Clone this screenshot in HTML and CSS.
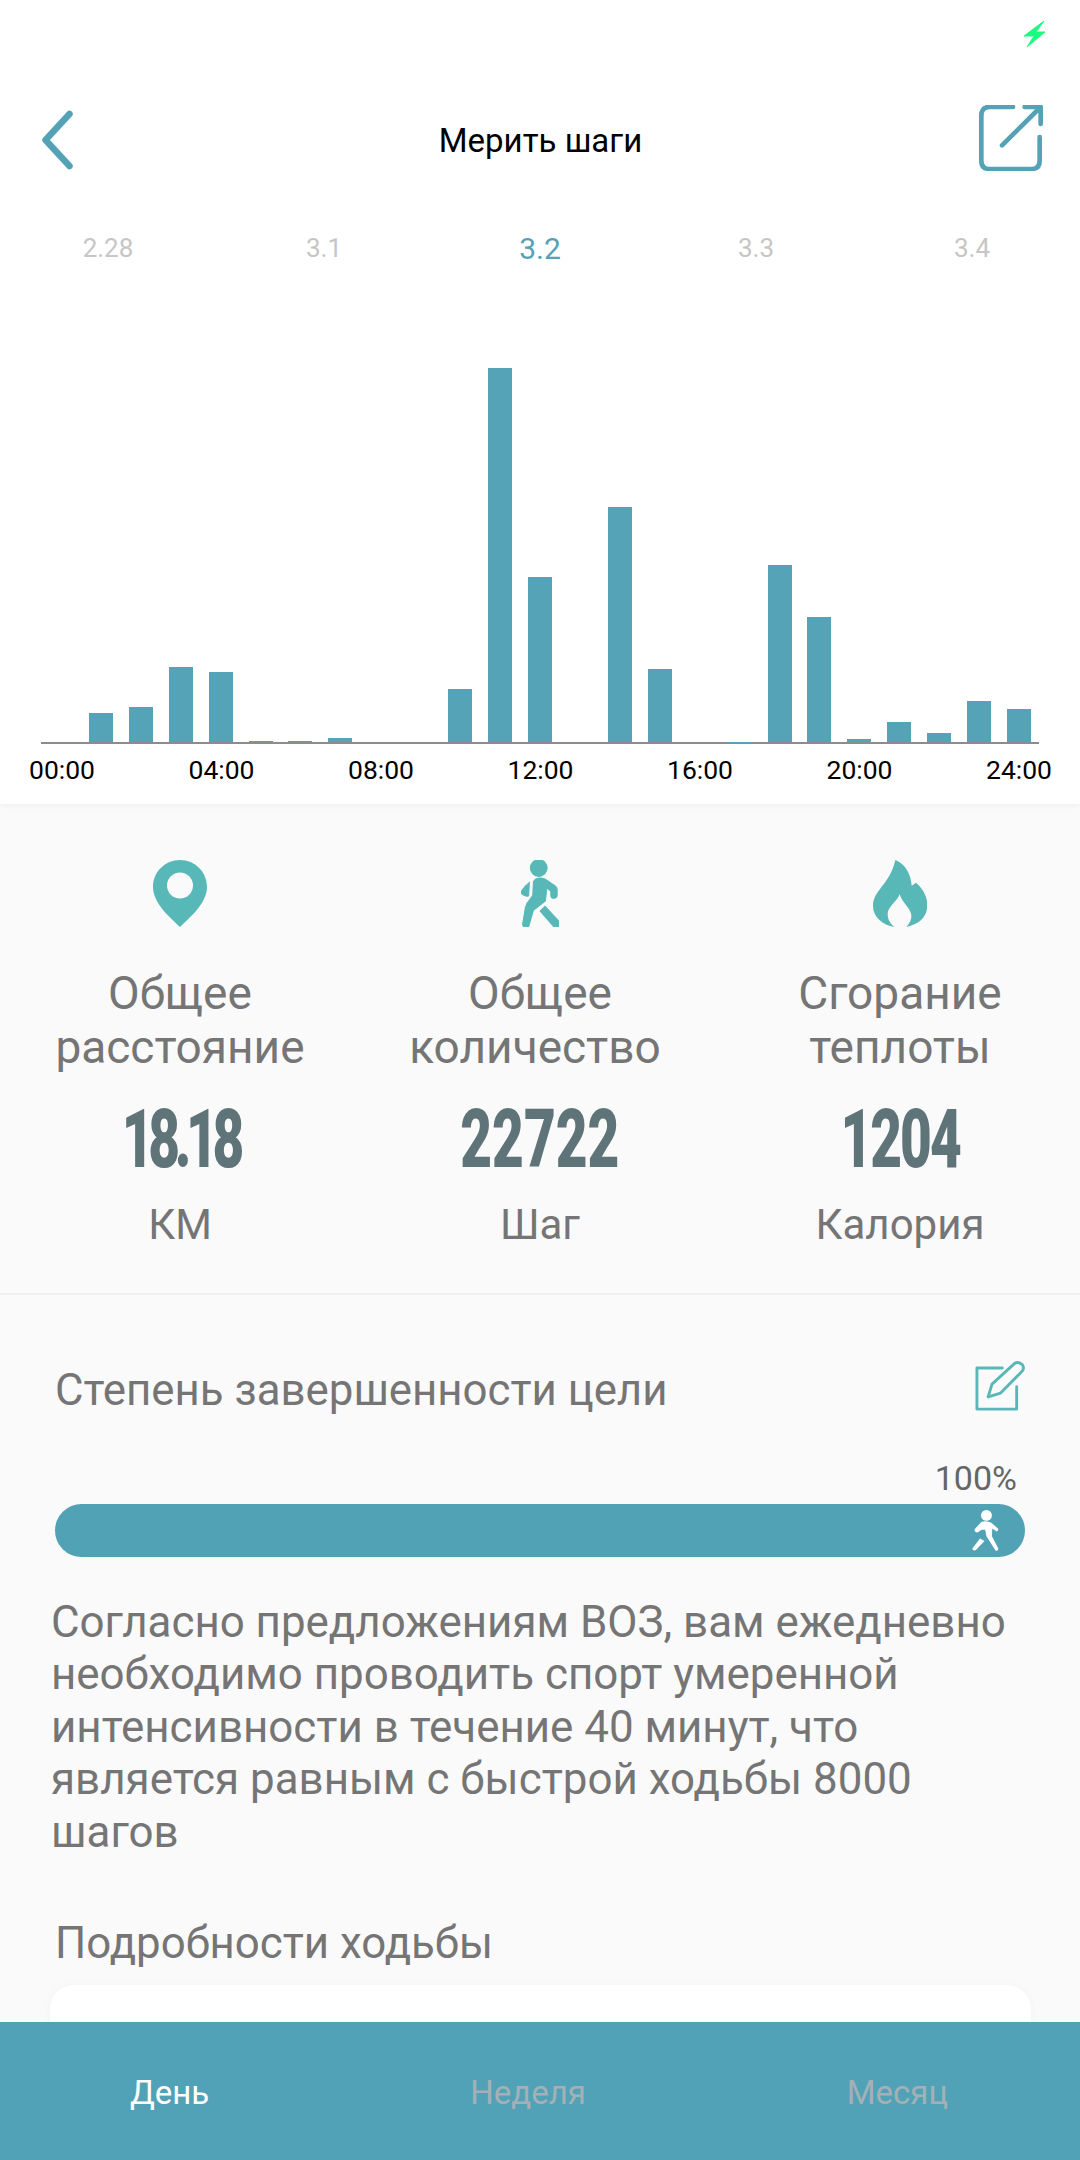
FILE: index.html
```html
<!DOCTYPE html>
<html>
<head>
	<title>Мерить шаги</title>
	<meta charset="utf-8">
	<link rel="stylesheet" href="styles.css">
</head>
<body>
	<div id="page">
		<div id="main">
			<div id="top">
				<div class="status">
					<svg class="bolt" viewBox="0 0 21 26"><polygon points="20,0 0,15 10,15 3,26 21,11 12,11"/></svg>
				</div>
				<div class="nav">
					<svg class="back" viewBox="0 0 34 60"><polyline points="29,4 5,30 29,56"/></svg>
					<p class="title">Мерить шаги</p>
					<svg class="share" viewBox="60 46 188 198"><path d="M160 52H90Q65 52 65 78V213Q65 238 90 238H215Q240 238 240 213V142M195 52H243V103M243 52L127 167"/></svg>
				</div>
				<div class="dates">
					<span>2.28</span>
					<span>3.1</span>
					<span class="active">3.2</span>
					<span>3.3</span>
					<span>3.4</span>
				</div>
				<div id="chart">
					<div></div>
					<div><i style="height:29px"></i></div>
					<div><i style="height:35px"></i></div>
					<div><i style="height:75px"></i></div>
					<div><i style="height:70px"></i></div>
					<div><i style="height:1.5px"></i></div>
					<div><i style="height:1.5px"></i></div>
					<div><i style="height:4px"></i></div>
					<div></div>
					<div></div>
					<div><i style="height:53px"></i></div>
					<div><i style="height:374px"></i></div>
					<div><i style="height:165px"></i></div>
					<div></div>
					<div><i style="height:235px"></i></div>
					<div><i style="height:73px"></i></div>
					<div></div>
					<div><i style="height:0.5px"></i></div>
					<div><i style="height:177px"></i></div>
					<div><i style="height:125px"></i></div>
					<div><i style="height:3px"></i></div>
					<div><i style="height:20px"></i></div>
					<div><i style="height:9px"></i></div>
					<div><i style="height:41px"></i></div>
					<div><i style="height:33px"></i></div>
				</div>
				<div class="hours">
					<span>00:00</span>
					<span>04:00</span>
					<span>08:00</span>
					<span>12:00</span>
					<span>16:00</span>
					<span>20:00</span>
					<span>24:00</span>
				</div>
			</div>

			<div id="stats">
				<div class="stat">
					<svg class="stat-icon" viewBox="0 0 54 67"><path fill-rule="evenodd" d="M27 0C12 0 0 12 0 27C0 44 19 59 27 67C35 59 54 44 54 27C54 12 42 0 27 0ZM27 12.500A13 13 0 1 1 27 38.500A13 13 0 1 1 27 12.500Z"/></svg>
					<p class="stat-label">Общее<br>расстояние</p>
					<p class="stat-num"><span class="tight">18.18</span></p>
					<p class="stat-unit">КМ</p>
				</div>
				<div class="stat">
					<svg class="stat-icon walk" viewBox="75 30 116 200">
						<circle cx="128" cy="54" r="25"/>
						<path d="M112 95Q118 83 135 84Q145 85 152 90L178 108Q184 113 183 122V135A9.500 9.500 0 0 1 164 135V124L152 113L148 152L112 180L100 222A10 10 0 0 1 80 220L88 172Q90 160 100 150L110 135Z"/>
						<path d="M100 97L98 137Q90 140 80 133Q74 128 77 122L88 108Z"/>
						<path d="M147 168L188 212A10 10 0 0 1 172 228L132 182Z"/>
					</svg>
					<p class="stat-label">Общее<br><span class="nudge">количество</span></p>
					<p class="stat-num"><span>22722</span></p>
					<p class="stat-unit">Шаг</p>
				</div>
				<div class="stat">
					<svg class="stat-icon" viewBox="68 30 163 201"><path d="M135 30C165 42 182 72 184 107L197 98C220 118 231 142 231 165C231 198 210 222 168 231C182 215 187 200 180 185C172 168 155 155 148 133C140 155 112 170 112 192C112 208 120 222 133 231C95 225 68 200 68 168C68 120 118 105 135 30Z"/></svg>
					<p class="stat-label">Сгорание<br>теплоты</p>
					<p class="stat-num"><span class="snug">1204</span></p>
					<p class="stat-unit">Калория</p>
				</div>
			</div>

			<div id="goal">
				<div class="goal-head">
					<p class="heading">Степень завершенности цели</p>
					<svg class="edit" viewBox="72 60 156 156"><path d="M157 82H78V210H202V140M113 172L125 132L195 68Q208 60 220 72Q228 85 216 95L152 160Z"/></svg>
				</div>
				<p class="percent">100%</p>
				<div class="progress">
					<svg class="walker" viewBox="65 507 84 130">
						<circle cx="110" cy="525" r="17"/>
						<path d="M95 545Q112 540 125 548L145 565Q149 572 142 575L128 566L127 590L147 628Q147 637 138 634L110 590L106 570L95 570L82 578Q72 578 73 568Z"/>
						<path d="M90 597L104 605L78 632Q68 638 66 628Z"/>
					</svg>
				</div>
				<p class="advice">Согласно предложениям ВОЗ, вам ежедневно необходимо проводить спорт умеренной интенсивности в течение 40 минут, что является равным с быстрой ходьбы 8000 шагов</p>
				<p class="heading details">Подробности ходьбы</p>
				<div class="card"></div>
			</div>
		</div>

		<div id="tabs">
			<span class="on">День</span>
			<span>Неделя</span>
			<span>Месяц</span>
		</div>
	</div>
</body>
</html>
```

FILE: styles.css
```css
* {
	box-sizing: border-box;
}

body {
	margin: 0px;
	font-family: Roboto, "Noto Sans", sans-serif;
	color: #757575;
}

p {
	margin: 0px;
}

#page {
	width: 1080px;
	height: 2160px;
	display: flex;
	flex-direction: column;
	overflow: hidden;
	background: #fafafb;
}

#main {
	flex: 1;
	overflow: hidden;
}

/* top white part */
#top {
	height: 804px;
	background: white;
	box-shadow: 0px 1px 6px rgba(0, 0, 0, 0.06);
	position: relative;
}

.status {
	height: 70px;
	padding: 21px 35px 0px 0px;
	display: flex;
	justify-content: flex-end;
}

.bolt {
	width: 21px;
	height: 26px;
	fill: #1cfb80;
	stroke: #1cfb80;
	stroke-width: 1;
}

.nav {
	height: 140px;
	padding: 0px 37px 0px 38px;
	display: flex;
	align-items: center;
	justify-content: space-between;
}

.back {
	width: 39px;
	height: 60px;
	margin-right: 25px;
	fill: none;
	stroke: #55a2b6;
	stroke-width: 6.500;
	stroke-linecap: round;
	stroke-linejoin: round;
}

.title {
	font-size: 33px;
	color: black;
}

.share {
	width: 64px;
	height: 66px;
	margin-bottom: 4px;
	fill: none;
	stroke: #55a2b6;
	stroke-width: 14;
	stroke-linecap: round;
	stroke-linejoin: round;
}

.dates {
	height: 76px;
	display: grid;
	grid-template-columns: repeat(5, 1fr);
	align-items: center;
	text-align: center;
	font-size: 26px;
	color: #c6c6c6;
}

.dates .active {
	font-size: 30px;
	color: #55a2b6;
}

#chart {
	width: 998px;
	height: 458px;
	margin-left: 41px;
	display: grid;
	grid-template-columns: repeat(25, 1fr);
	border-bottom: 2px solid #8c8c8c;
}

#chart div {
	display: flex;
	align-items: flex-end;
	justify-content: center;
}

#chart i {
	display: block;
	width: 24px;
	background: #55a3b7;
}

.hours {
	padding: 10px 28px 0px 29px;
	display: flex;
	justify-content: space-between;
	font-size: 26.500px;
	line-height: 32px;
	color: black;
}

/* the three totals */
#stats {
	height: 491px;
	padding-top: 56px;
	display: flex;
	border-bottom: 2px solid #f1f1f1;
}

.stat {
	width: 360px;
	display: flex;
	flex-direction: column;
	align-items: center;
	text-align: center;
}

.stat-icon {
	height: 67px;
	fill: #58b8b8;
}

.walk {
	stroke: #58b8b8;
	stroke-width: 3;
}

.stat-label {
	margin-top: 39px;
	font-size: 46px;
	line-height: 54px;
}

.nudge {
	margin-right: 10px;
}

.stat-num {
	margin-top: 24px;
	height: 82px;
	font-size: 82px;
	line-height: 82px;
	font-weight: 900;
	color: #5f7479;
}

.stat-num span {
	display: inline-block;
	transform: scaleX(0.67);
}

.stat-num .tight {
	letter-spacing: -8px;
}

.stat-num .snug {
	letter-spacing: -3px;
}

.stat-unit {
	margin-top: 18px;
	font-size: 42px;
	line-height: 54px;
}

/* goal */
#goal {
	padding: 66px 55px 0px 55px;
}

.goal-head {
	height: 58px;
	display: flex;
	justify-content: space-between;
	align-items: flex-start;
}

.heading {
	font-size: 43.800px;
	line-height: 58px;
}

.edit {
	width: 50px;
	height: 50px;
	fill: none;
	stroke: #58b8b8;
	stroke-width: 9;
	stroke-linejoin: round;
	stroke-linecap: round;
}

.percent {
	margin-top: 39px;
	padding-right: 8px;
	text-align: right;
	font-size: 34px;
	line-height: 40px;
	color: #666666;
}

.progress {
	height: 53px;
	margin-top: 6px;
	padding: 5px 26px 0px 0px;
	display: flex;
	justify-content: flex-end;
	border-radius: 27px;
	background: #52a2b6;
}

.walker {
	width: 27px;
	height: 43px;
	fill: white;
}

.advice {
	margin: 39px -10px 0px -4px;
	font-size: 43.900px;
	line-height: 52.400px;
}

.details {
	margin-top: 56px;
}

.card {
	height: 100px;
	margin: 13px -6px 0px -5px;
	border-radius: 24px;
	background: white;
	box-shadow: 0px 0px 8px rgba(0, 0, 0, 0.03);
}

/* bottom bar */
#tabs {
	height: 138px;
	padding: 2px 132px 0px 130px;
	display: flex;
	align-items: center;
	justify-content: space-between;
	background: #51a2b7;
	font-size: 33px;
	color: #a3b1b6;
}

#tabs .on {
	color: white;
}
```
